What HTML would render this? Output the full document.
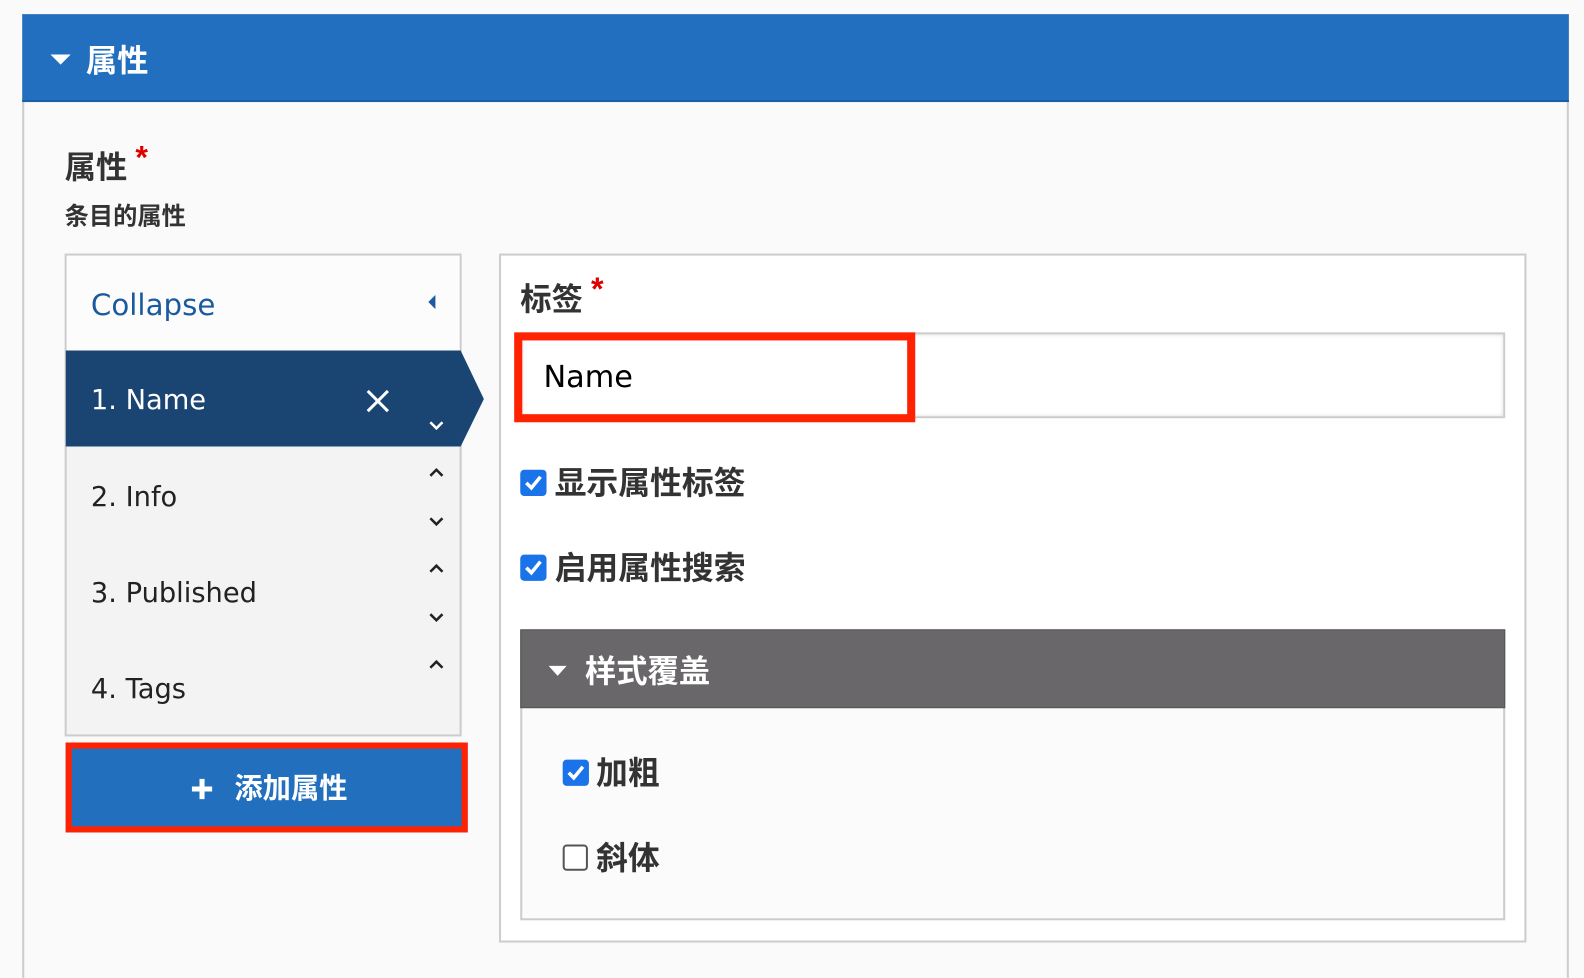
<!DOCTYPE html>
<html><head><meta charset="utf-8"><style>
*{box-sizing:border-box;margin:0;padding:0}
body{width:1584px;height:968px;background:#fafafa;font-family:"Liberation Sans","Noto Sans CJK SC",sans-serif;position:relative;overflow:hidden}
#w{position:absolute;left:0;top:0;width:1568px;height:958px;transform:scale(1.0102);transform-origin:0 0}
.a{position:absolute}
.cb{position:absolute;width:26px;height:26px;border-radius:4px;background:#1a73e8}
.cb svg{position:absolute;left:3px;top:3px}
.zh{font-family:"Noto Sans CJK SC",sans-serif;font-weight:bold;color:#333}
.chev{position:absolute;left:424px}
</style></head><body><div id="w">
<div class="a" style="left:22px;top:14px;width:1531px;height:954px;border-left:2px solid #ccc;border-right:2px solid #ccc"></div>
<div class="a" style="left:22px;top:14px;width:1531px;height:87px;background:#216fbe;border-bottom:2px solid #1b5fa6"></div>
<svg class="a" style="left:50px;top:54px" width="20" height="12"><path d="M0 0H20L10 10Z" fill="#fff"/></svg>
<div class="a zh" style="left:85px;top:36px;font-size:31px;color:#fff;line-height:44px">属性</div>

<div class="a zh" style="left:64px;top:141px;font-size:31px;line-height:44px">属性</div>
<div class="a" style="left:134px;top:138px;font-size:32px;color:#d00;font-weight:bold">*</div>
<div class="a zh" style="left:64px;top:196px;font-size:24px;line-height:32px">条目的属性</div>

<div class="a" style="left:64px;top:251px;width:393px;height:478px;border:2px solid #ccc;background:#f3f3f3"></div>
<div class="a" style="left:66px;top:253px;width:389px;height:94px;background:#fcfcfc"></div>
<div class="a" style="left:90px;top:285px;color:#1c5a9e;font-family:'DejaVu Sans',sans-serif;font-size:29px">Collapse</div>
<svg class="a" style="left:424px;top:292px" width="8" height="14"><path d="M7 0V14L0 7Z" fill="#1c5a9e"/></svg>
<svg class="a" style="left:65px;top:347px" width="415" height="95"><path d="M0 0H391L414 48L391 95H0Z" fill="#1a4472"/></svg>
<div class="a" style="left:90px;top:381px;font-size:27px;color:#fff;font-family:'DejaVu Sans',sans-serif">1. Name</div>
<svg class="a" style="left:362px;top:385px" width="24" height="24"><path d="M2 2L22 22M22 2L2 22" stroke="#fff" stroke-width="3"/></svg>
<svg class="chev" style="top:416px" width="16" height="10"><path d="M2 2L8 8L14 2" stroke="#fff" stroke-width="2.5" fill="none"/></svg>

<div class="a" style="left:90px;top:477px;font-size:27px;color:#222;font-family:'DejaVu Sans',sans-serif">2. Info</div>
<svg class="chev" style="top:463px" width="16" height="10"><path d="M2 8L8 2L14 8" stroke="#222" stroke-width="2.5" fill="none"/></svg>
<svg class="chev" style="top:511px" width="16" height="10"><path d="M2 2L8 8L14 2" stroke="#222" stroke-width="2.5" fill="none"/></svg>
<div class="a" style="left:90px;top:572px;font-size:27px;color:#222;font-family:'DejaVu Sans',sans-serif">3. Published</div>
<svg class="chev" style="top:558px" width="16" height="10"><path d="M2 8L8 2L14 8" stroke="#222" stroke-width="2.5" fill="none"/></svg>
<svg class="chev" style="top:606px" width="16" height="10"><path d="M2 2L8 8L14 2" stroke="#222" stroke-width="2.5" fill="none"/></svg>
<div class="a" style="left:90px;top:667px;font-size:27px;color:#222;font-family:'DejaVu Sans',sans-serif">4. Tags</div>
<svg class="chev" style="top:653px" width="16" height="10"><path d="M2 8L8 2L14 8" stroke="#222" stroke-width="2.5" fill="none"/></svg>

<div class="a" style="left:65px;top:735px;width:398px;height:89px;background:#226fbe;border:6px solid #ff2200"></div>
<svg class="a" style="left:188px;top:769px" width="24" height="24"><path d="M12 2V22M2 12H22" stroke="#fff" stroke-width="5"/></svg>
<div class="a zh" style="left:232px;top:759px;font-size:28px;color:#fff;line-height:40px">添加属性</div>

<div class="a" style="left:494px;top:251px;width:1017px;height:682px;border:2px solid #ccc;background:#fff"></div>
<div class="a zh" style="left:515px;top:272px;font-size:31px;line-height:44px">标签</div>
<div class="a" style="left:585px;top:268px;font-size:32px;color:#d00;font-weight:bold">*</div>
<div class="a" style="left:515px;top:329px;width:975px;height:85px;border:2px solid #ccc;background:#fff;box-shadow:inset 0 0 4px #ddd"></div>
<div class="a" style="left:509px;top:329px;width:397px;height:89px;border:8px solid #ff2200"></div>
<div class="a" style="left:538px;top:356px;font-size:30px;color:#000;font-family:'DejaVu Sans',sans-serif">Name</div>

<div class="cb" style="left:515px;top:465px"><svg width="20" height="20"><path d="M3 10L8 15L17 4" stroke="#fff" stroke-width="3.5" fill="none"/></svg></div>
<div class="a zh" style="left:549px;top:454px;font-size:31.5px;line-height:44px">显示属性标签</div>
<div class="cb" style="left:515px;top:549px"><svg width="20" height="20"><path d="M3 10L8 15L17 4" stroke="#fff" stroke-width="3.5" fill="none"/></svg></div>
<div class="a zh" style="left:549px;top:538px;font-size:31.5px;line-height:44px">启用属性搜索</div>

<div class="a" style="left:515px;top:623px;width:975px;height:288px;border:2px solid #ccc;background:#fbfbfb"></div>
<div class="a" style="left:515px;top:623px;width:975px;height:78px;background:#69676a;border:1px solid #555"></div>
<svg class="a" style="left:543px;top:659px" width="18" height="10"><path d="M0 0H18L9 10Z" fill="#fff"/></svg>
<div class="a zh" style="left:579px;top:640px;font-size:31px;color:#fff;line-height:44px">样式覆盖</div>

<div class="cb" style="left:557px;top:752px"><svg width="20" height="20"><path d="M3 10L8 15L17 4" stroke="#fff" stroke-width="3.5" fill="none"/></svg></div>
<div class="a zh" style="left:590px;top:741px;font-size:31.5px;line-height:44px">加粗</div>
<div class="a" style="left:557px;top:836px;width:25px;height:26px;border:2px solid #555;border-radius:4px;background:#fff"></div>
<div class="a zh" style="left:590px;top:825px;font-size:31.5px;line-height:44px">斜体</div>
</div></body></html>
